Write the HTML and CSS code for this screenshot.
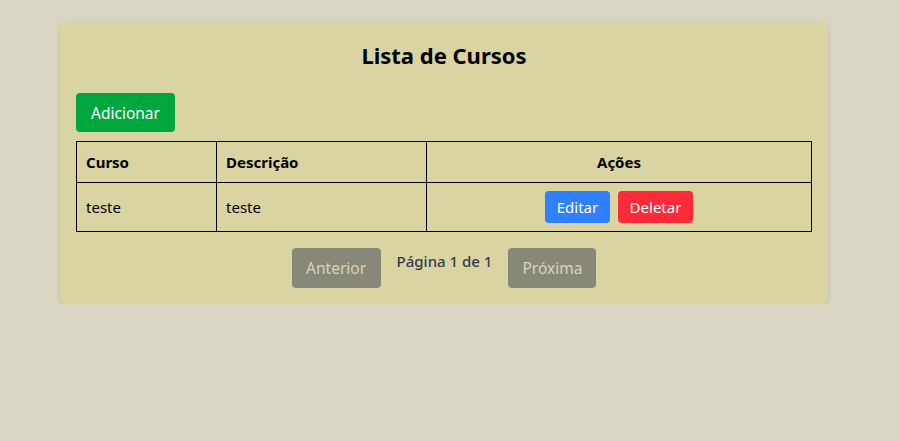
FILE: index.html
```html
<!DOCTYPE html>
<html lang="pt">
<head>
<meta charset="utf-8">
<link rel="stylesheet" href="styles.css">
</head>
<body>
<div class="card">
  <h2 class="title">Lista de Cursos</h2>
  <button class="btn btn-add">Adicionar</button>
  <table class="table">
    <thead>
      <tr><th class="c1">Curso</th><th class="c2">Descrição</th><th class="c3">Ações</th></tr>
    </thead>
    <tbody>
      <tr>
        <td>teste</td>
        <td>teste</td>
        <td class="actions"><button class="btn btn-sm btn-edit">Editar</button><button class="btn btn-sm btn-del">Deletar</button></td>
      </tr>
    </tbody>
  </table>
  <div class="pager">
    <button class="btn btn-page btn-prev" disabled>Anterior</button>
    <span class="page-info">Página 1 de 1</span>
    <button class="btn btn-page btn-next" disabled>Próxima</button>
  </div>
</div>
</body>
</html>
```
FILE: styles.css
```css
html, body { margin: 0; padding: 0; }
body {
  background: #d8d6c2;
  font-family: "Noto Sans", "Open Sans", sans-serif;
  color: #000;
  padding-top: 22px;
}
.card {
  width: 736px;
  margin-left: 60px;
  background: #d9d4a1;
  border-radius: 6px;
  padding: 16px;
  box-shadow: 0 2px 5px rgba(0,0,0,0.12);
}
.title {
  text-align: center;
  font-size: 22px;
  font-weight: 700;
  line-height: 34px;
  margin: 0 0 21px;
}
.btn {
  font-family: inherit;
  border: none;
  border-radius: 4px;
  color: #fff;
  font-size: 16px;
  cursor: pointer;
}
.btn-add {
  background: #00a63e;
  height: 39px;
  width: 99px;
  padding: 0;
  display: block;
  margin-bottom: 9px;
  font-size: 15.5px;
}
.table {
  width: 100%;
  border-collapse: collapse;
  font-size: 15px;
}
.table th, .table td {
  border: 1px solid #000;
  padding: 0 9px;
  text-align: left;
}
.table th { height: 40px; font-weight: 700; }
.table td { height: 48px; }
.table th.c1 { width: 121px; }
.table th.c2 { width: 191px; }
.table th.c3 { text-align: center; }
.table td.actions { text-align: center; }
.btn-sm {
  height: 32px;
  vertical-align: middle;
  font-size: 15px;
  padding: 0;
}
.btn-edit { background: #2f80ff; width: 65px; margin-right: 8px; }
.btn-del { background: #ff2a38; width: 75px; }
.pager {
  display: flex;
  justify-content: center;
  margin-top: 16px;
}
.btn-page {
  background: #878878;
  color: #d8d5bd;
  height: 40px;
  padding: 0;
  cursor: default;
  font-size: 15.5px;
}
.btn-prev { width: 89px; }
.btn-next { width: 88px; }
.page-info {
  margin: 0 16px;
  line-height: 26px;
  color: #343a55;
  font-size: 15px;
  font-weight: 500;
}
```
